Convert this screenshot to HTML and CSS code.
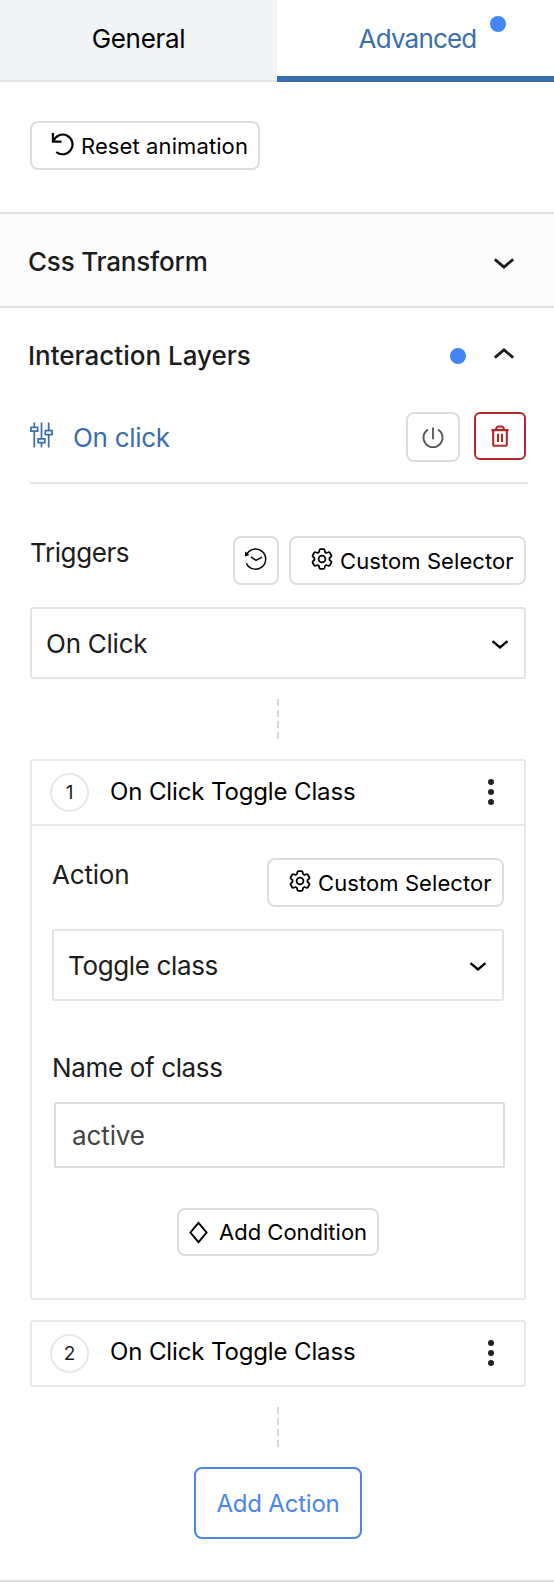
FILE: index.html
```html
<!DOCTYPE html>
<html lang="en">

<head>
    <meta charset="UTF-8" />
    <meta name="viewport" content="width=device-width, initial-scale=1" />
    <title>Interaction Layers</title>
    <link rel="stylesheet" href="styles.css">
</head>

<body>
    <!-- Shared icons -->
    <svg class="sprite" aria-hidden="true">
        <symbol id="gear" viewBox="2 2 20 20">
            <path d="M9.594 3.94c.09-.542.56-.94 1.11-.94h2.593c.55 0 1.02.398 1.11.94l.213 1.281c.063.374.313.686.645.87.074.04.147.083.22.127.325.196.72.257 1.075.124l1.217-.456a1.125 1.125 0 0 1 1.37.49l1.296 2.247a1.125 1.125 0 0 1-.26 1.431l-1.003.827c-.293.241-.438.613-.43.992a7.723 7.723 0 0 1 0 .255c-.008.378.137.75.43.991l1.004.827c.424.35.534.955.26 1.43l-1.298 2.247a1.125 1.125 0 0 1-1.369.491l-1.217-.456c-.355-.133-.75-.072-1.076.124a6.47 6.47 0 0 1-.22.128c-.331.183-.581.495-.644.869l-.213 1.281c-.09.543-.56.94-1.11.94h-2.594c-.55 0-1.019-.398-1.11-.94l-.213-1.281c-.062-.374-.312-.686-.644-.87a6.52 6.52 0 0 1-.22-.127c-.325-.196-.72-.257-1.076-.124l-1.217.456a1.125 1.125 0 0 1-1.369-.49l-1.297-2.247a1.125 1.125 0 0 1 .26-1.431l1.004-.827c.292-.24.437-.613.43-.991a6.932 6.932 0 0 1 0-.255c.007-.38-.138-.751-.43-.992l-1.004-.827a1.125 1.125 0 0 1-.26-1.43l1.297-2.247a1.125 1.125 0 0 1 1.37-.491l1.216.456c.356.133.751.072 1.076-.124.072-.044.146-.086.22-.128.332-.183.582-.495.644-.869l.214-1.28Z" />
            <circle cx="12" cy="12" r="3.1" />
        </symbol>
        <symbol id="chevron" viewBox="0 0 24 14">
            <path d="M2 2.5l10 8.5 10-8.5" />
        </symbol>
    </svg>

    <div class="panel">

        <div class="tabs">
            <div class="tab"><span class="tab-general">General</span></div>
            <div class="tab active"><span class="tab-advanced">Advanced<i class="dot tab-dot"></i></span></div>
        </div>

        <div class="toolbar">
            <button class="btn btn-reset">
                <svg class="icon icon-reset" viewBox="0 0 24 24">
                    <path d="M2 1v9h9M2.6 9.2A10.3 10.3 0 1 1 5.5 20.8" />
                </svg>
                <span class="txt-reset">Reset animation</span>
            </button>
        </div>

        <div class="section closed">
            <h2 class="txt-transform">Css Transform</h2>
            <svg class="icon chevron"><use href="#chevron" /></svg>
        </div>

        <div class="section open">
            <h2 class="txt-layers">Interaction Layers</h2>
            <i class="dot"></i>
            <svg class="icon chevron up"><use href="#chevron" /></svg>
        </div>

        <div class="content">

            <div class="layer">
                <svg class="icon icon-sliders" viewBox="0 0 24 28">
                    <path d="M4.5 1v5M4.5 10v17M12 1v17M12 22v5M19.500 1v8.500M19.500 13.500v13.500" />
                    <path d="M1 6h7v4H1zM8.500 18h7v4h-7zM16 9.500h7v4h-7z" />
                </svg>
                <span class="layer-name">On click</span>
                <button class="btn btn-power">
                    <svg class="icon" viewBox="0 0 24 24">
                        <path d="M12 1v13M6.500 3.300a10.400 10.400 0 1 0 11 0" />
                    </svg>
                </button>
                <button class="btn btn-delete">
                    <svg class="icon" viewBox="0 0 22 24">
                        <path d="M1.500 5.500h19M3.500 5.500v15.500q0 1.800 1.800 1.800h11.400q1.800 0 1.800-1.800V5.500M6.500 5.500q.3-4 3-4h3q2.700 0 3 4M8.800 9.500v9M13.200 9.500v9" />
                    </svg>
                </button>
            </div>

            <div class="field-head">
                <label class="txt-triggers">Triggers</label>
                <div class="field-buttons">
                    <button class="btn btn-history">
                        <svg class="icon" viewBox="0 0 24 24">
                            <path d="M1.800 5.900A11 11 0 1 1 1.500 15.500M6.500 8.500l5.500 3.800 6.500-3.500" />
                            <path class="fill" d="M0 2.600v5.600l5-1.600z" />
                        </svg>
                    </button>
                    <button class="btn btn-selector">
                        <svg class="icon icon-gear"><use href="#gear" /></svg>
                        <span class="txt-selector">Custom Selector</span>
                    </button>
                </div>
            </div>

            <div class="select">
                <span class="txt-onclick">On Click</span>
                <svg class="icon chevron-sm"><use href="#chevron" /></svg>
            </div>

            <svg class="connector" viewBox="0 0 2 41"><path d="M1 0v41" /></svg>

            <div class="card card-open">
                <div class="card-head">
                    <span class="number">1</span>
                    <span class="card-title">On Click Toggle Class</span>
                    <span class="menu"><i></i><i></i><i></i></span>
                </div>
                <div class="card-body">
                    <div class="field-head">
                        <label class="txt-action">Action</label>
                        <button class="btn btn-selector">
                            <svg class="icon icon-gear"><use href="#gear" /></svg>
                            <span class="txt-selector">Custom Selector</span>
                        </button>
                    </div>
                    <div class="select">
                        <span class="txt-toggle">Toggle class</span>
                        <svg class="icon chevron-sm"><use href="#chevron" /></svg>
                    </div>
                    <label class="name-label">Name of class</label>
                    <input class="name-input" type="text" value="active" />
                    <button class="btn btn-condition">
                        <svg class="icon icon-diamond" viewBox="0 0 20 24">
                            <path d="M10 1.800L18.500 12 10 22.200 1.500 12z" />
                        </svg>
                        <span class="txt-condition">Add Condition</span>
                    </button>
                </div>
            </div>

            <div class="card card-closed">
                <div class="card-head">
                    <span class="number">2</span>
                    <span class="card-title">On Click Toggle Class</span>
                    <span class="menu"><i></i><i></i><i></i></span>
                </div>
            </div>

            <svg class="connector" viewBox="0 0 2 41"><path d="M1 0v41" /></svg>

            <button class="btn-add">Add Action</button>

        </div>

    </div>
</body>

</html>
```

FILE: styles.css
```css
* {
    box-sizing: border-box;
    margin: 0;
    padding: 0;
}

body {
    font-family: Inter, "Liberation Sans", sans-serif;
    font-size: 26px;
    line-height: 32px;
    background: #fff;
    color: #1c1c1c;
}

button,
input {
    font: inherit;
}

.sprite {
    display: none;
}

.panel {
    width: 554px;
    height: 1582px;
    border-bottom: 2px solid #ddd;
    overflow: hidden;
}

.icon {
    display: block;
    flex-shrink: 0;
    fill: none;
    stroke: currentColor;
    stroke-width: 2;
    overflow: visible;
}

.icon .fill {
    fill: currentColor;
    stroke: none;
}

.dot {
    display: block;
    width: 16px;
    height: 16px;
    border-radius: 50%;
    background: #4285f4;
}

/* Tabs */
.tabs {
    display: flex;
    height: 82px;
}

.tab {
    display: flex;
    justify-content: center;
    width: 50%;
    padding-top: 23px;
    background: #f0f4f7;
    border-bottom: 2px solid #e0e2e3;
    color: #000;
}

.tab.active {
    padding-left: 4px;
    background: #fff;
    border-bottom: 6px solid #3a6eac;
    color: #3a6eac;
}

.tab-general {
    letter-spacing: -0.3px;
}

.tab-advanced {
    position: relative;
    letter-spacing: -0.8px;
}

.tab-dot {
    position: absolute;
    top: -7px;
    right: -30px;
}

/* Buttons */
.btn {
    display: flex;
    align-items: center;
    height: 49px;
    background: #fff;
    border: 2px solid #ddd;
    border-radius: 8px;
    color: #000;
    font-size: 22px;
}

.toolbar {
    height: 130px;
    padding: 39px 30px 0;
}

.btn-reset {
    width: 230px;
    padding-left: 19px;
}

.icon-reset {
    width: 23px;
    height: 23px;
    margin: -4px 7px 0 0;
    stroke-width: 2.2;
}

.txt-reset {
    letter-spacing: 0.1px;
}

/* Sections */
.section {
    display: flex;
    align-items: center;
    padding: 0 39px 0 28px;
}

.section h2 {
    flex: 1;
    font-size: 26px;
    font-weight: 500;
}

.section.closed {
    height: 96px;
    padding-top: 3px;
    background: #fbfbfb;
    border-top: 2px solid #e2e2e2;
    border-bottom: 2px solid #e2e2e2;
}

.section.open {
    height: 96px;
}

.txt-transform {
    letter-spacing: -0.2px;
}

.txt-layers {
    letter-spacing: 0;
}

.chevron {
    width: 22px;
    height: 13px;
    margin-top: 3px;
    stroke-width: 3;
}

.chevron.up {
    transform: scaleY(-1);
    margin: -6px 0 0 27px;
}

/* Layer row */
.content {
    padding: 0 28px 0 30px;
}

.layer {
    display: flex;
    align-items: flex-start;
    height: 80px;
    padding: 8px 2px 0 0;
    margin-right: -2px;
    border-bottom: 2px solid #e5e5e5;
}

.icon-sliders {
    width: 23px;
    height: 28px;
    margin-top: 9px;
    color: #3a6eac;
    stroke-width: 1.8;
}

.layer-name {
    flex: 1;
    margin: 10px 0 0 20px;
    color: #3a6eac;
    letter-spacing: -0.3px;
}

.btn-power,
.btn-delete {
    justify-content: center;
    width: 54px;
    height: 50px;
}

.btn-power {
    color: #555;
}

.btn-power .icon {
    width: 22px;
    height: 23px;
    stroke-width: 2;
}

.btn-delete {
    width: 52px;
    height: 48px;
    margin-left: 14px;
    border-color: #b3282d;
    border-radius: 6px;
    color: #b3282d;
}

.btn-delete .icon {
    width: 20px;
    height: 22px;
    stroke-width: 2.3;
}

/* Fields */
.field-head {
    display: flex;
    justify-content: space-between;
    height: 71px;
}

.layer + .field-head {
    margin-top: 52px;
}

.field-head label {
    padding-top: 1px;
}

.txt-triggers {
    letter-spacing: -0.4px;
}

.txt-action {
    letter-spacing: -0.2px;
}

.field-buttons {
    display: flex;
    gap: 10px;
}

.btn-history {
    justify-content: center;
    width: 46px;
}

.btn-history .icon {
    width: 22px;
    height: 22px;
    margin-top: -2px;
    stroke-width: 1.6;
}

.btn-selector {
    width: 237px;
    padding-left: 20px;
}

.icon-gear {
    width: 22px;
    height: 22px;
    margin: -3px 7px 0 0;
    stroke-width: 1.6;
}

.txt-selector {
    letter-spacing: 0.08px;
    white-space: nowrap;
}

.select {
    display: flex;
    align-items: center;
    justify-content: space-between;
    height: 72px;
    padding: 2px 15px 0 14px;
    border: 2px solid #e4e4e4;
    border-radius: 3px;
}

.txt-onclick {
    letter-spacing: -0.25px;
}

.txt-toggle {
    letter-spacing: -0.35px;
}

.chevron-sm {
    width: 18px;
    height: 11px;
    color: #000;
    stroke-width: 3.2;
}

.connector {
    display: block;
    width: 2px;
    height: 41px;
    margin: 20px auto 19px;
    fill: none;
    stroke: #d8d8d8;
    stroke-width: 2;
    stroke-dasharray: 7 4;
}

/* Action cards */
.card {
    border: 2px solid #e8e8e8;
    border-radius: 3px;
}

.card-open {
    height: 541px;
}

.card-closed {
    height: 67px;
    margin-top: 20px;
}

.card-head {
    display: flex;
    align-items: center;
    height: 63px;
    padding: 0 30px 0 18px;
}

.card-open .card-head {
    height: 65px;
    border-bottom: 2px solid #e8e8e8;
}

.number {
    width: 39px;
    height: 39px;
    border: 2px solid #e8e8e8;
    border-radius: 50%;
    font-size: 19px;
    line-height: 35px;
    text-align: center;
}

.card-title {
    flex: 1;
    margin: -2px 0 0 21px;
    color: #000;
    font-size: 24px;
    letter-spacing: -0.13px;
}

.card-closed .card-title {
    margin-top: -4px;
}

.menu {
    display: flex;
    flex-direction: column;
    gap: 4px;
    margin-top: -2px;
}

.menu i {
    width: 6px;
    height: 6px;
    border-radius: 50%;
    background: #222;
}

.card-body {
    display: flex;
    flex-direction: column;
    padding: 32px 20px 0;
}

.name-label {
    margin-top: 51px;
    letter-spacing: -0.35px;
}

.name-input {
    width: 451px;
    height: 66px;
    margin: 18px 0 40px 2px;
    padding: 0 16px;
    border: 2px solid #ddd;
    border-radius: 2px;
    color: #444;
    letter-spacing: -0.1px;
}

.btn-condition {
    align-self: center;
    width: 202px;
    height: 48px;
    padding-left: 10px;
}

.icon-diamond {
    width: 19px;
    height: 23px;
    margin-right: 11px;
}

.txt-condition {
    letter-spacing: 0;
}

.btn-add {
    display: block;
    width: 168px;
    height: 72px;
    margin: 0 auto;
    padding-top: 2px;
    background: #fff;
    border: 2px solid #4a86e8;
    border-radius: 8px;
    color: #4a86e8;
    font-size: 24px;
    letter-spacing: -0.2px;
}
```
